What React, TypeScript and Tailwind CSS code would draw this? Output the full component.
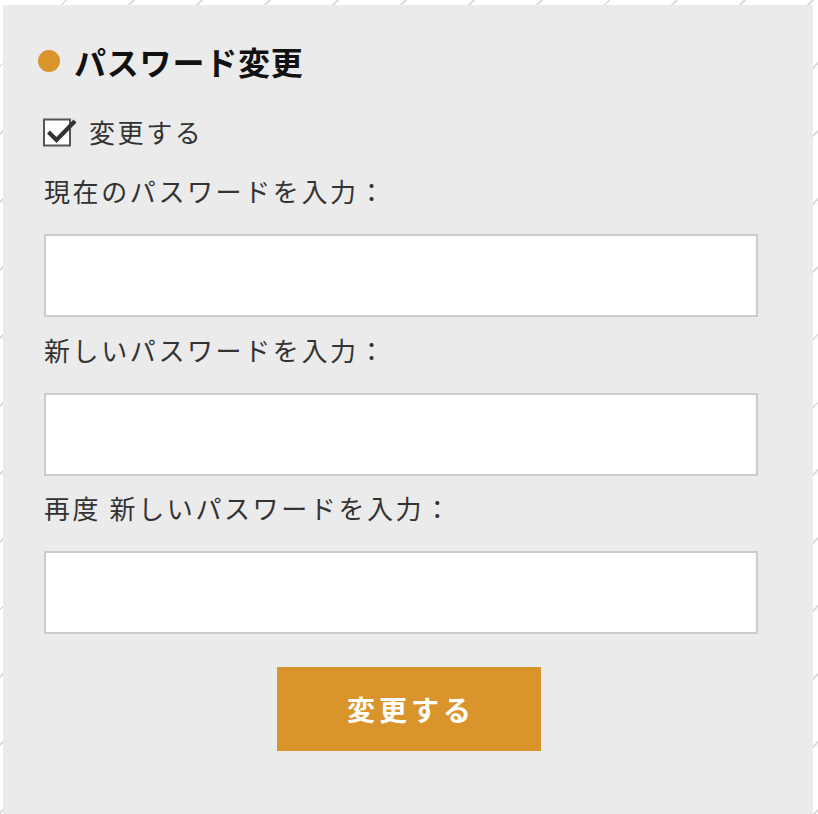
import { useState } from "react";

const jp = "font-['Meiryo','Noto_Sans_CJK_JP',sans-serif]";

function Field({ label, className }: { label: string; className: string }) {
  return (
    <div className={className}>
      <label className="block text-[26px] leading-[40px] tracking-[2.6px] text-[#333]">{label}</label>
      <input
        type="password"
        className="mt-[23px] block h-[83px] w-[714px] border-2 border-[#cccccc] bg-white px-3 outline-none"
      />
    </div>
  );
}

export default function App() {
  const [checked, setChecked] = useState(true);

  return (
    <div
      className={`h-[814px] overflow-hidden bg-white pl-[3px] pt-[5px] ${jp} bg-[repeating-linear-gradient(135deg,#ffffff_0px,#ffffff_46px,#dcdcdc_46px,#dcdcdc_48px)]`}
    >
      <div className="h-[809px] w-[810px] bg-[#ebebeb] pl-[41px] pt-[36px]">
        <h2 className="-ml-[6px] flex items-center gap-[14px] text-[32px] font-bold leading-[40px] tracking-[0.8px] text-[#111]">
          <span className="h-[22px] w-[22px] rounded-full bg-[#d9942b]" />
          パスワード変更
        </h2>

        <label
          className="mt-[35px] flex cursor-pointer items-center gap-[11px] text-[26px] leading-[32px] tracking-[2.6px] text-[#333]"
          onClick={() => setChecked(!checked)}
        >
          <svg width="36" height="32" viewBox="0 0 36 32" className="-ml-[2px]">
            <rect x="2" y="3.5" width="26" height="26" fill="white" stroke="#555" strokeWidth="2" />
            {checked && (
              <path d="M6.5 16 L14.5 24 L33 5" fill="none" stroke="#333" strokeWidth="4.2" />
            )}
          </svg>
          変更する
        </label>

        <Field label="現在のパスワードを入力：" className="mt-[23px]" />
        <Field label="新しいパスワードを入力：" className="mt-[13px]" />
        <Field label="再度 新しいパスワードを入力：" className="mt-[12px]" />

        <div className="flex w-[730px] justify-center">
          <button className="mt-[33px] h-[84px] w-[264px] bg-[#d9942b] pl-[4px] text-[28px] font-bold tracking-[4px] text-white">
            変更する
          </button>
        </div>
      </div>
    </div>
  );
}
